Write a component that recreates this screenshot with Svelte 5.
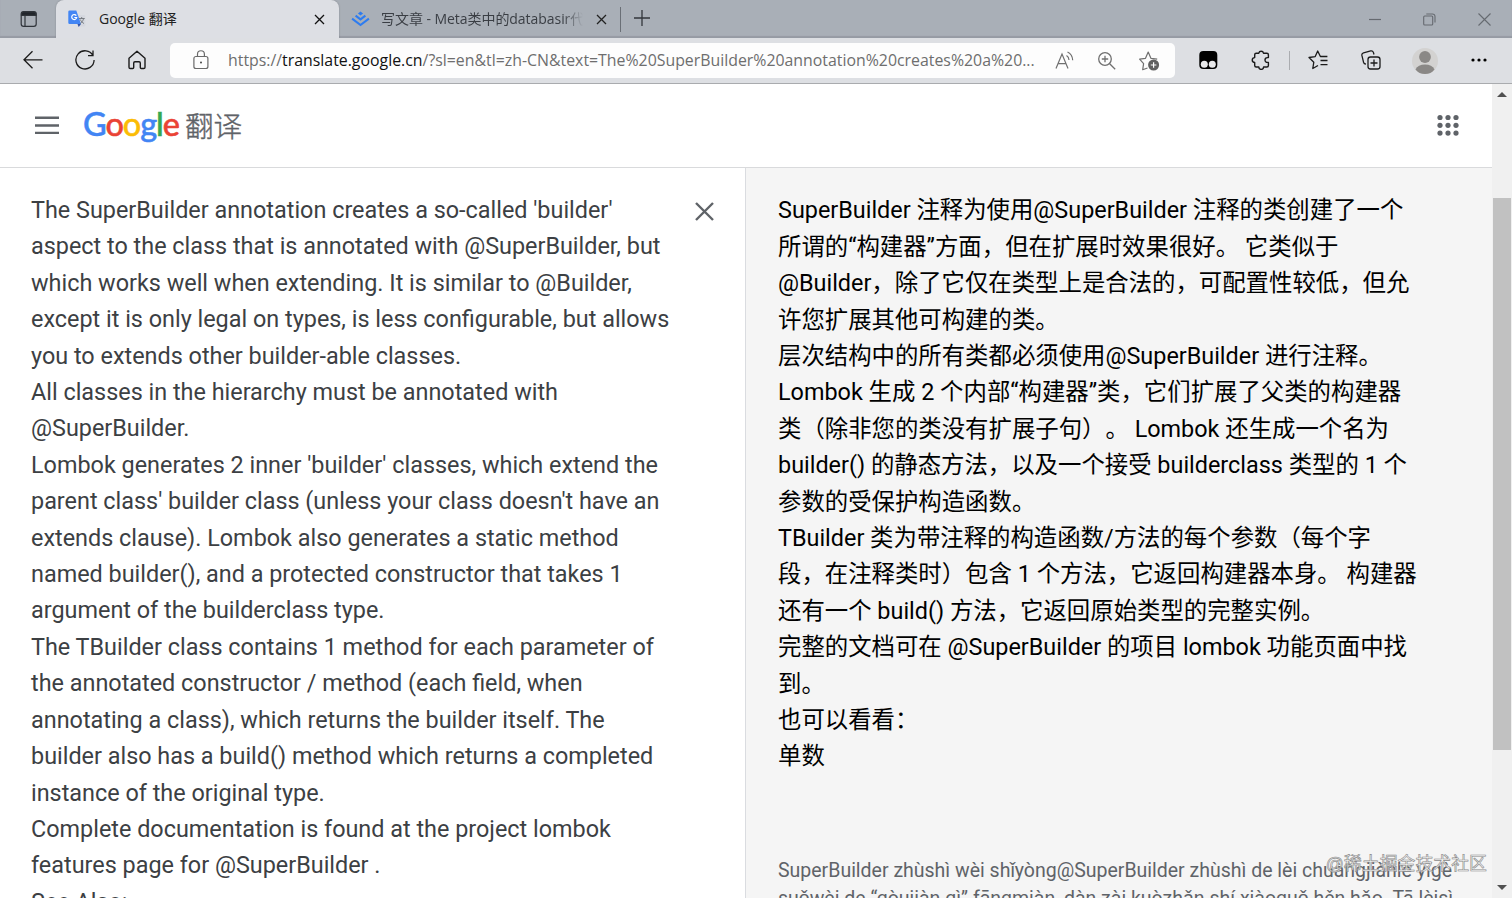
<script>
  const sourceLines = [
    "The SuperBuilder annotation creates a so-called 'builder'",
    'aspect to the class that is annotated with @SuperBuilder, but',
    'which works well when extending. It is similar to @Builder,',
    'except it is only legal on types, is less configurable, but allows',
    'you to extends other builder-able classes.',
    'All classes in the hierarchy must be annotated with',
    '@SuperBuilder.',
    "Lombok generates 2 inner 'builder' classes, which extend the",
    "parent class' builder class (unless your class doesn't have an",
    'extends clause). Lombok also generates a static method',
    'named builder(), and a protected constructor that takes 1',
    'argument of the builderclass type.',
    'The TBuilder class contains 1 method for each parameter of',
    'the annotated constructor / method (each field, when',
    'annotating a class), which returns the builder itself. The',
    'builder also has a build() method which returns a completed',
    'instance of the original type.',
    'Complete documentation is found at the project lombok',
    'features page for @SuperBuilder .',
    'See Also:'
  ];

  const resultLines = [
    'SuperBuilder 注释为使用@SuperBuilder 注释的类创建了一个',
    '所谓的“构建器”方面，但在扩展时效果很好。 它类似于',
    '@Builder，除了它仅在类型上是合法的，可配置性较低，但允',
    '许您扩展其他可构建的类。',
    '层次结构中的所有类都必须使用@SuperBuilder 进行注释。',
    'Lombok 生成 2 个内部“构建器”类，它们扩展了父类的构建器',
    '类（除非您的类没有扩展子句）。 Lombok 还生成一个名为',
    'builder() 的静态方法，以及一个接受 builderclass 类型的 1 个',
    '参数的受保护构造函数。',
    'TBuilder 类为带注释的构造函数/方法的每个参数（每个字',
    '段，在注释类时）包含 1 个方法，它返回构建器本身。 构建器',
    '还有一个 build() 方法，它返回原始类型的完整实例。',
    '完整的文档可在 @SuperBuilder 的项目 lombok 功能页面中找',
    '到。',
    '也可以看看：',
    '单数'
  ];

  const pinyinLines = [
    'SuperBuilder zhùshì wèi shǐyòng@SuperBuilder zhùshì de lèi chuàngjiànle yīgè',
    'suǒwèi de “gòujiàn qì” fāngmiàn, dàn zài kuòzhǎn shí xiàoguǒ hěn hǎo. Tā lèisì'
  ];

  const logo = [
    ['G', '#4285f4'],
    ['o', '#ea4335'],
    ['o', '#fbbc05'],
    ['g', '#4285f4'],
    ['l', '#34a853'],
    ['e', '#ea4335']
  ];

  const dots = [0, 1, 2, 3, 4, 5, 6, 7, 8];
</script>

<div class="window">
  <div class="tabstrip">
    <button class="tab-actions" aria-label="Tab actions">
      <svg width="18" height="18" viewBox="0 0 18 18" fill="none" stroke="#30343a" stroke-width="1.2">
        <rect x="1.2" y="1.7" width="15" height="14.6" rx="2.4" />
        <path d="M1.5 3.8Q1.5 2 3.5 2H14q2 0 2 2v1.4H1.5z" fill="#20242a" />
        <path d="M5 6v10" />
      </svg>
    </button>
    <div class="tab active">
      <svg width="18" height="18" viewBox="0 0 18 18">
        <path d="M9 5h7a1.3 1.3 0 0 1 1.3 1.3v9a1.3 1.3 0 0 1-1.3 1.3h-5z" fill="#d5d8df" />
        <path d="M1.6.5h6.700L13 14H1.6A1.3 1.3 0 0 1 .3 12.700V1.800A1.300 1.300 0 0 1 1.600.500z" fill="#4285f4" />
        <path d="M9.500 14H13l-2.300 3z" fill="#3053a8" />
        <path d="M11 8.500h5.700M13.700 7v1.500M15.600 8.500c-.5 2.300-1.800 4-3.300 5M12.300 9.500c.6 1.700 2 3.100 3.700 4" fill="none" stroke="#6f7479" stroke-width=".9" />
        <path d="M8.300 5.600A2.500 2.500 0 1 0 8.700 7.500H6.300" fill="none" stroke="#fff" stroke-width="1.200" />
      </svg>
      <span class="title">Google 翻译</span>
      <button class="close" aria-label="Close tab">
        <svg width="11" height="11" viewBox="0 0 11 11"><path d="M1 1l9 9M10 1l-9 9" stroke="#111" stroke-width="1.300" /></svg>
      </button>
    </div>
    <div class="tab">
      <svg width="19" height="16" viewBox="0 0 19 16" fill="none" stroke="#2d7cf0" stroke-width="2">
        <path d="M9.500.400l2.600 2-2.600 2-2.600-2z" fill="#2d7cf0" stroke="none" />
        <path d="M4.600 4.600l4.900 3.800 4.900-3.800M1.100 7.600l8.400 6.500 8.400-6.500" />
      </svg>
      <span class="title faded">写文章 - Meta类中的databasir代</span>
      <button class="close" aria-label="Close tab">
        <svg width="11" height="11" viewBox="0 0 11 11"><path d="M1 1l9 9M10 1l-9 9" stroke="#222" stroke-width="1.300" /></svg>
      </button>
    </div>
    <button class="new-tab" aria-label="New tab">
      <svg width="16" height="16" viewBox="0 0 16 16"><path d="M8 0v16M0 8h16" stroke="#33373c" stroke-width="1.300" /></svg>
    </button>
    <div class="controls">
      <svg width="12" height="12" viewBox="0 0 12 12"><path d="M0 6.500h12" stroke="#666a70" stroke-width="1.200" /></svg>
      <svg width="13" height="13" viewBox="0 0 13 13" fill="none" stroke="#666a70" stroke-width="1.100"><rect x=".7" y="3" width="9" height="9" rx="1" /><path d="M3.300 1h6.200a2.500 2.500 0 0 1 2.500 2.500v6" /></svg>
      <svg width="13" height="13" viewBox="0 0 13 13"><path d="M.5.500l12 12M12.500.500l-12 12" stroke="#666a70" stroke-width="1.100" /></svg>
    </div>
  </div>

  <div class="toolbar">
    <nav>
      <svg width="20" height="20" viewBox="0 0 20 20" fill="none" stroke="#1b1b1b" stroke-width="1.300"><path d="M19.500 9.800H1M9.500 1.300L1 9.800l8.500 8.500" /></svg>
      <svg width="20" height="20" viewBox="0 0 20 20" fill="none" stroke="#1b1b1b" stroke-width="1.300"><path d="M18 5.500A9.100 9.100 0 1 0 19.100 10M18 .6v5h-5" /></svg>
      <svg width="20" height="20" viewBox="0 0 20 20" fill="none" stroke="#1b1b1b" stroke-width="1.400" stroke-linejoin="round"><path d="M2 8.200L10 1.200l8 7v9q0 1.300-1.300 1.300h-2.400q-1 0-1-1V13q0-1.300-1.300-1.300H8Q6.700 11.700 6.700 13v4.500q0 1-1 1H3.300Q2 18.500 2 17.200z" /></svg>
    </nav>
    <div class="address">
      <svg class="lock" width="16" height="20" viewBox="0 0 16 20" fill="none" stroke="#6a6a6a" stroke-width="1.200"><rect x=".9" y="6.500" width="14" height="12" rx="2" /><path d="M4.500 6.500V4.200a3.400 3.400 0 0 1 6.900 0v2.300" /><circle cx="8" cy="12.500" r="1" fill="#444" stroke="none" /></svg>
      <span class="url">https://<b>translate.google.cn</b>/?sl=en&amp;tl=zh-CN&amp;text=The%20SuperBuilder%20annotation%20creates%20a%20...</span>
      <svg width="20" height="20" viewBox="0 0 20 20" fill="none" stroke="#707070" stroke-width="1.200"><path d="M1 17.500L7 3l6 14.500M3 12.700h8M11.500 4.500q2.500 1.500 2.500 4.500M12.500 1q5 2.500 5.200 8.300" /></svg>
      <svg width="18" height="18" viewBox="0 0 18 18" fill="none" stroke="#707070" stroke-width="1.300"><circle cx="7" cy="7" r="6.300" /><path d="M11.700 11.700l5.500 5.500M3.800 7h6.400M7 3.800v6.400" /></svg>
      <svg width="21" height="20" viewBox="0 0 21 20" fill="none" stroke="#707070" stroke-width="1.200" stroke-linejoin="round"><path d="M8.500 17l-4.800 1.700.9-6L.6 8.200l5.900-.9L9.200 1l2.700 6.300 6.300.9" /><circle cx="14.600" cy="14" r="5.500" fill="#606060" stroke="none" /><path d="M14.600 11.200v5.600M11.800 14h5.600" stroke="#fff" /></svg>
    </div>
    <div class="tools">
      <svg width="20" height="20" viewBox="0 0 20 20"><rect x="1.300" y="1" width="18" height="18" rx="4" fill="#000" /><circle cx="6.300" cy="14.200" r="3.500" fill="#e8e8ea" /><circle cx="14.300" cy="14.200" r="3.500" fill="#e8e8ea" /></svg>
      <svg class="puzzle" width="20" height="20" viewBox="0 0 20 20" fill="none" stroke="#1b1b1b" stroke-width="1.400" stroke-linejoin="round"><path d="M5.200 3.200h2.600a2.400 2.400 0 0 1 4.700 0h3.400q1.500 0 1.500 1.500v2.900h-1a2.400 2.400 0 0 0 0 4.800h1v3.100q0 1.500-1.500 1.500h-3.300a2.400 2.400 0 0 1-4.800 0H5.200q-1.500 0-1.500-1.500v-3a2.400 2.400 0 0 1 0-4.900V4.700q0-1.500 1.500-1.500z" /></svg>
      <i class="divider"></i>
      <svg class="favs" width="20" height="20" viewBox="0 0 20 20" fill="none" stroke="#1b1b1b" stroke-width="1.300" stroke-linejoin="round"><path d="M10 15.500l-5.200 3 1-6.300L1 7.500l6.200-.9L9.700 1l2.700 5.500h7M12.500 10.500h7M12.500 14.700h7" /></svg>
      <svg class="collections" width="20" height="20" viewBox="0 0 20 20" fill="none" stroke="#1b1b1b" stroke-width="1.300"><rect x="7" y="7" width="12" height="12" rx="2.500" /><path d="M13 9.500v7M9.500 13h7M5 14.200q-2-.3-2.500-2L.9 5.400q-.4-2 1.600-2.600l7.200-1.900q2-.4 2.700 1.500l.6 2.100" /></svg>
      <svg class="avatar" width="26" height="26" viewBox="0 0 26 26"><circle cx="13" cy="13" r="13" fill="#d3d2d1" /><circle cx="13" cy="9" r="5.900" fill="#8a8886" /><path d="M3.500 21.500Q6 16.500 13 16.500t9.500 5Q19 26 13 26T3.500 21.500z" fill="#8a8886" /></svg>
      <svg width="16" height="4" viewBox="0 0 16 4"><circle cx="2" cy="2" r="1.600" /><circle cx="8" cy="2" r="1.600" /><circle cx="14" cy="2" r="1.600" /></svg>
    </div>
  </div>

  <div class="viewport">
    <div class="page">
      <header>
        <svg width="24" height="18" viewBox="0 0 24 18"><path d="M0 1.800h24M0 9.500h24M0 17h24" stroke="#5f6368" stroke-width="2.500" /></svg>
        <div class="brand">
          <span class="google">{#each logo as [letter, color]}<span style="color: {color}">{letter}</span>{/each}</span>
          <span class="product">翻译</span>
        </div>
        <svg class="apps" width="22" height="22" viewBox="0 0 22 22" fill="#5f6368">
          {#each dots as d}
            <circle cx={3 + (d % 3) * 8} cy={3.5 + Math.floor(d / 3) * 7.8} r="2.600" />
          {/each}
        </svg>
      </header>
      <main>
        <section class="source">
          <div class="text">
            {#each sourceLines as line}
              <p>{line}</p>
            {/each}
          </div>
          <button class="clear" aria-label="Clear source text">
            <svg width="19" height="19" viewBox="0 0 19 19"><path d="M1 1l17 17M18 1L1 18" stroke="#5f6368" stroke-width="2.400" /></svg>
          </button>
        </section>
        <section class="result">
          <div class="text" lang="zh-CN">
            {#each resultLines as line}
              <p>{line}</p>
            {/each}
          </div>
          <div class="pinyin">
            {#each pinyinLines as line}
              <p>{line}</p>
            {/each}
          </div>
          <span class="watermark">@稀土掘金技术社区</span>
        </section>
      </main>
    </div>
    <div class="scrollbar">
      <i class="up"></i>
      <i class="thumb"></i>
      <i class="down"></i>
    </div>
  </div>
</div>

<style>
  :global(body) {
    margin: 0;
    overflow: hidden;
  }
  .window {
    width: 1512px;
    height: 898px;
    display: flex;
    flex-direction: column;
    overflow: hidden;
    font-family: 'Open Sans', 'Noto Sans CJK SC', sans-serif;
  }
  svg {
    display: block;
    flex: none;
  }
  button {
    border: 0;
    padding: 0;
    background: none;
  }
  p {
    margin: 0;
    white-space: pre;
  }
  .tabstrip {
    height: 38px;
    flex: none;
    display: flex;
    background: #a9afb7;
    box-shadow: inset 0 -2px 1px #969ba4;
  }
  .tab-actions {
    width: 56px;
    display: flex;
    align-items: center;
    box-sizing: border-box;
    padding-left: 20px;
  }
  .tab {
    width: 282px;
    box-sizing: border-box;
    display: flex;
    align-items: center;
    padding: 0 13px 0 12px;
    font-size: 14px;
    line-height: 18px;
    color: #3a3e44;
  }
  .tab.active {
    width: 283px;
    padding-right: 14px;
    background: #dddfe4;
    border-radius: 8px 8px 0 0;
    color: #222;
    box-shadow: 0 0 2px #80858c;
    clip-path: inset(-2px -2px 0);
  }
  .tab:not(.active) {
    border-right: 1px solid transparent;
    border-image: linear-gradient(transparent 20%, #6a6f76 20%, #6a6f76 82%, transparent 82%) 1;
  }
  .title {
    flex: 1;
    margin-left: 13px;
    white-space: nowrap;
    overflow: hidden;
  }
  .faded {
    margin-left: 11px;
    margin-right: 13px;
    letter-spacing: -0.05px;
    mask-image: linear-gradient(90deg, #000 90%, transparent);
  }
  .new-tab {
    padding-left: 13px;
  }
  .new-tab svg {
    margin-top: -2px;
  }
  .controls {
    display: flex;
    align-items: center;
    gap: 42px;
    margin-left: auto;
    padding-right: 21px;
  }
  .toolbar {
    height: 46px;
    flex: none;
    box-sizing: border-box;
    display: flex;
    align-items: center;
    background: #dddfe3;
    border-bottom: 1px solid #a9abae;
  }
  nav {
    width: 170px;
    display: flex;
    gap: 32px;
    padding-left: 23px;
    box-sizing: border-box;
  }
  nav svg,
  .tools svg {
    margin-top: -1px;
  }
  .address {
    width: 1005px;
    height: 35px;
    box-sizing: border-box;
    display: flex;
    align-items: center;
    gap: 23px;
    padding: 0 15px 0 23px;
    background: #fdfdfd;
    border-radius: 5px;
  }
  .lock {
    margin-right: -4px;
    margin-top: -2px;
  }
  .url {
    flex: 1;
    width: 0;
    margin-top: -1px;
    font-size: 15.87px;
    color: #6e6e6e;
    white-space: nowrap;
  }
  .url b {
    font-weight: 400;
    color: #111;
  }
  .tools {
    flex: 1;
    display: flex;
    align-items: center;
    padding-left: 23px;
  }
  .tools .puzzle {
    margin-left: 33px;
  }
  .divider {
    width: 1px;
    height: 19px;
    margin: 0 18px;
    background: #aaacb0;
  }
  .tools .collections {
    margin-left: 33px;
  }
  .tools .avatar {
    margin: 0 33px 0 31px;
  }
  .viewport {
    flex: 1;
    display: flex;
    min-height: 0;
  }
  .page {
    width: 1492px;
    display: flex;
    flex-direction: column;
  }
  header {
    height: 84px;
    flex: none;
    box-sizing: border-box;
    display: flex;
    align-items: center;
    padding: 0 33px 1px 35px;
    border-bottom: 1px solid #d9dadc;
    background: #fff;
  }
  .brand {
    display: flex;
    align-items: center;
    height: 40px;
    margin-left: 24px;
    margin-top: -1px;
  }
  .google {
    width: 102px;
    margin-top: -2px;
    font: 500 32.5px Lato, sans-serif;
    letter-spacing: -1.1px;
    -webkit-text-stroke: 0.5px;
  }
  .product {
    font: 300 28.6px 'Noto Sans CJK SC', sans-serif;
    color: #5f6368;
    -webkit-text-stroke: 0.4px;
  }
  .apps {
    margin-left: auto;
  }
  main {
    flex: 1;
    display: flex;
    min-height: 0;
  }
  section {
    box-sizing: border-box;
    overflow: hidden;
  }
  .source {
    width: 746px;
    display: flex;
    align-items: flex-start;
    padding: 24px 31.5px 0 31px;
    border-right: 1px solid #dadce0;
    background: #fff;
    color: #3c4043;
  }
  .text {
    font: 23.4px/36.4px Roboto, 'Noto Sans CJK SC', sans-serif;
    text-spacing-trim: space-all;
  }
  .clear {
    margin: 10px 0 0 auto;
  }
  .result {
    position: relative;
    flex: 1;
    padding: 24.4px 0 0 32px;
    background: #f5f5f5;
  }
  .pinyin {
    margin-top: 82.6px;
    font: 19.5px/28px Roboto, sans-serif;
    color: #5f6368;
  }
  .watermark {
    position: absolute;
    right: 5px;
    bottom: 21px;
    font: 17.9px/26px 'Liberation Sans', 'Noto Sans CJK SC', sans-serif;
    color: #f5f5f5;
    -webkit-text-stroke: 0.6px #888;
  }
  .scrollbar {
    width: 20px;
    display: flex;
    flex-direction: column;
    align-items: center;
    background: #f0f0f0;
  }
  .up,
  .down {
    width: 0;
    border: 5px solid transparent;
    border-top-width: 0;
    border-bottom: 5px solid #505050;
    margin-top: 8px;
  }
  .thumb {
    width: 18px;
    height: 552px;
    margin-top: 101px;
    background: #c1c1c1;
  }
  .down {
    margin: auto 0 8px;
    transform: rotate(180deg);
  }
</style>
